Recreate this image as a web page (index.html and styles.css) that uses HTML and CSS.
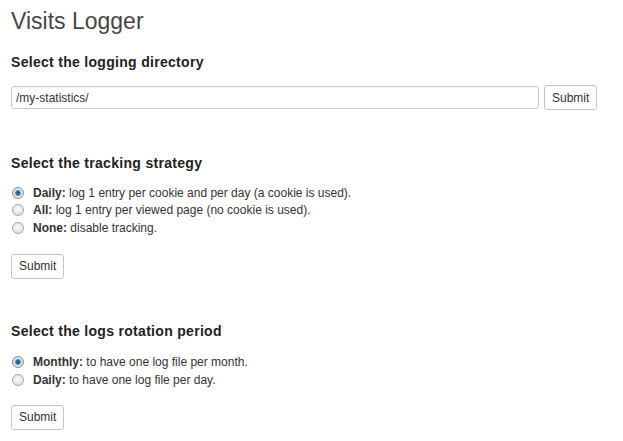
FILE: index.html
```html
<!DOCTYPE html>
<html>
<head>
<meta charset="utf-8">
<link rel="stylesheet" href="styles.css">
</head>
<body>
<div class="wrap">
  <h2 class="title">Visits Logger</h2>

  <form class="section">
    <h3 class="heading">Select the logging directory</h3>
    <div class="dir-row">
      <input class="text-input" type="text" value="/my-statistics/">
      <button class="btn" type="button">Submit</button>
    </div>
  </form>

  <form class="section">
    <h3 class="heading">Select the tracking strategy</h3>
    <div class="options">
      <label class="option"><input class="radio" type="radio" name="t" checked><span><b>Daily:</b> log 1 entry per cookie and per day (a cookie is used).</span></label>
      <label class="option"><input class="radio" type="radio" name="t"><span><b>All:</b> log 1 entry per viewed page (no cookie is used).</span></label>
      <label class="option"><input class="radio" type="radio" name="t"><span><b>None:</b> disable tracking.</span></label>
    </div>
    <button class="btn" type="button">Submit</button>
  </form>

  <form class="section">
    <h3 class="heading">Select the logs rotation period</h3>
    <div class="options">
      <label class="option"><input class="radio" type="radio" name="r" checked><span><b>Monthly:</b> to have one log file per month.</span></label>
      <label class="option"><input class="radio" type="radio" name="r"><span><b>Daily:</b> to have one log file per day.</span></label>
    </div>
    <button class="btn" type="button">Submit</button>
  </form>
</div>
</body>
</html>
```

FILE: styles.css
```css
html, body {
  margin: 0;
  padding: 0;
  background: #fff;
}
body {
  font-family: "Liberation Sans", Arial, sans-serif;
  color: #333;
  font-size: 12px;
}
.wrap {
  padding: 0 0 0 11px;
}
.title {
  margin: 0;
  padding-top: 7px;
  font-size: 23px;
  font-weight: normal;
  line-height: 29px;
  color: #464646;
}
.section {
  margin: 0;
}
.heading {
  margin: 0;
  font-size: 14px;
  font-weight: bold;
  line-height: 18px;
  color: #222;
  letter-spacing: 0.3px;
}
.section:nth-of-type(1) .heading {
  margin-top: 17px;
}
.section:nth-of-type(2) .heading {
  margin-top: 44px;
}
.section:nth-of-type(3) .heading {
  margin-top: 43px;
}
.dir-row {
  display: flex;
  align-items: center;
  gap: 5px;
  margin-top: 14px;
}
.text-input {
  box-sizing: border-box;
  width: 528px;
  height: 23px;
  margin: 0;
  padding: 0 4px;
  border: 1px solid #c8c8c8;
  border-radius: 3px;
  font: 12px "Liberation Sans", Arial, sans-serif;
  color: #333;
  box-shadow: inset 0 1px 1px rgba(0,0,0,0.04);
}
.btn {
  box-sizing: border-box;
  height: 25px;
  padding: 0 7px;
  margin: 0;
  border: 1px solid #c4c4c4;
  border-radius: 3px;
  background: #fff;
  font: 12px "Liberation Sans", Arial, sans-serif;
  color: #333;
}
.options {
  display: flex;
  flex-direction: column;
  margin-top: 12px;
  margin-bottom: 17px;
}
.section:nth-of-type(3) .options {
  margin-top: 14px;
  margin-bottom: 16px;
}
.option {
  display: flex;
  align-items: center;
  height: 17.5px;
  font-size: 12px;
  color: #333;
}
.option b {
  font-weight: bold;
}
.radio {
  appearance: none;
  -webkit-appearance: none;
  box-sizing: border-box;
  width: 12px;
  height: 12px;
  margin: 0 9px 0 1px;
  border-radius: 50%;
  border: 1px solid #a9a9a9;
  background: radial-gradient(circle at 50% 40%, #fbfbfb 0%, #e6e6e6 60%, #d0d0d0 100%);
  flex: none;
}
.radio:checked {
  background: radial-gradient(circle at 50% 50%, #1e4e6e 0%, #2a75a6 25%, #5ea4d0 38%, #dcdcdc 45%, #e8e8e8 70%, #cfcfcf 100%);
  border-color: #7e8e9a;
}
```
